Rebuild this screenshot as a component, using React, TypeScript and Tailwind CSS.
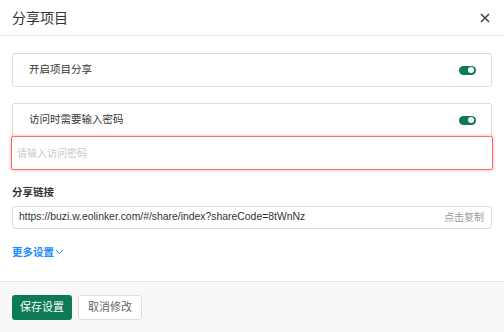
import { useState } from "react"

function Toggle({ on }: { on: boolean }) {
  return (
    <span
      className={`relative inline-flex h-[9px] w-[17px] items-center rounded-full ${
        on ? "bg-[#0b7a55]" : "bg-[#ccc]"
      }`}
    >
      <span
        className={`absolute top-[1.5px] h-[6px] w-[6px] rounded-full bg-white ${
          on ? "right-[2px]" : "left-[2px]"
        }`}
      />
    </span>
  )
}

export default function App() {
  const [shareOn] = useState(true)
  const [pwdOn] = useState(true)
  const url = "https://buzi.w.eolinker.com/#/share/index?shareCode=8tWnNz"

  return (
    <div
      className="flex h-[332px] w-[504px] flex-col bg-white text-[#333]"
      style={{ fontFamily: '"Liberation Sans", "Noto Sans CJK SC", sans-serif' }}
    >
      <div className="flex h-[36px] shrink-0 items-center justify-between border-b border-[#e6e6e6] pl-3 pr-[14px]">
        <span className="text-[14px] leading-none text-[#333]">分享项目</span>
        <svg width="10" height="10" viewBox="0 0 10 10" className="text-[#444]">
          <path d="M1 1L9 9M9 1L1 9" stroke="currentColor" strokeWidth="1.6" />
        </svg>
      </div>

      <div className="flex-1 px-3 pt-[17px]">
        <div className="flex h-[34px] items-center justify-between rounded-[3px] border border-[#dcdcdc] pl-4 pr-[15px]">
          <span className="text-[10.5px]">开启项目分享</span>
          <Toggle on={shareOn} />
        </div>

        <div className="mt-[16px] flex h-[33px] items-center justify-between rounded-t-[3px] border border-b-0 border-[#dcdcdc] pl-4 pr-[15px]">
          <span className="text-[10.5px]">访问时需要输入密码</span>
          <Toggle on={pwdOn} />
        </div>
        <div className="-mx-px flex h-[34px] items-center rounded-[2px] border border-[#f56c6c] px-[5px] shadow-[0_0_3px_rgba(245,108,108,0.7)]">
          <span className="text-[10px] text-[#c8c8c8]">请输入访问密码</span>
        </div>

        <div className="mt-[17px] text-[10.5px] font-bold leading-none text-[#333]">分享链接</div>
        <div className="mt-[8px] flex h-[23px] items-center justify-between rounded-[3px] border border-[#dcdcdc] pl-[6px] pr-[7px]">
          <span className="text-[10.4px] text-[#333]">{url}</span>
          <span className="text-[10px] text-[#999]">点击复制</span>
        </div>

        <div className="mt-[18px] flex items-center gap-[1px] text-[10.5px] font-bold leading-none text-[#1a8cff]">
          <span>更多设置</span>
          <svg width="9" height="6" viewBox="0 0 9 6">
            <path d="M1 1L4.5 4.5L8 1" stroke="currentColor" strokeWidth="1" fill="none" />
          </svg>
        </div>
      </div>

      <div className="flex h-[51px] shrink-0 items-start gap-[6px] border-t border-[#e6e6e6] bg-[#f8f8f8] px-3 pt-[13px]">
        <button className="flex h-[25px] items-center rounded-[3px] bg-[#0b7a55] px-[8px] text-[11px] text-white">
          保存设置
        </button>
        <button className="flex h-[25px] items-center rounded-[3px] border border-[#dcdcdc] bg-white px-[9px] text-[11px] text-[#666]">
          取消修改
        </button>
      </div>
    </div>
  )
}
